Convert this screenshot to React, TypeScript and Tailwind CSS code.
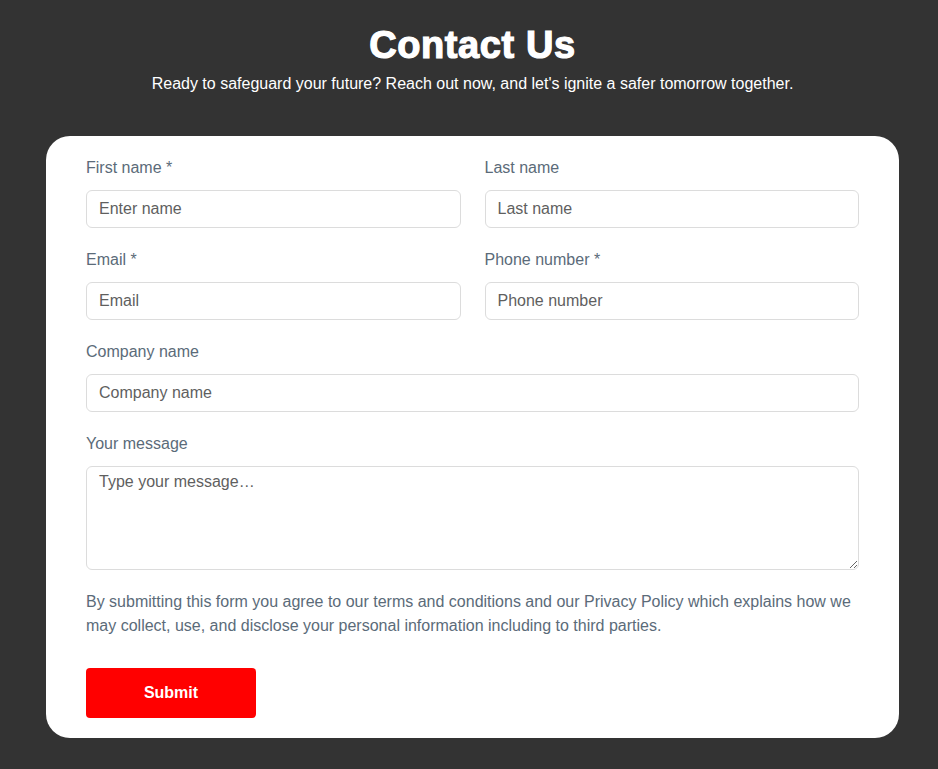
export default function App() {
  const label = 'block text-base leading-6 text-[#5b6b79] mb-[10px]'
  const input =
    'w-full h-[38px] px-3 rounded-md border border-[#dcdcdc] bg-white text-base text-[#444] placeholder:text-[#5f5f5f] outline-none'
  return (
    <div className="min-h-[769px] bg-[#333333] pt-[23px] pb-[31px] font-['Liberation_Sans',Arial,sans-serif]">
      <div className="ml-[46px] w-[853px]">
        <h1 className="text-center text-[38px] leading-[44px] font-bold text-white [-webkit-text-stroke:1.2px_white] tracking-[0.6px]">
          Contact Us
        </h1>
        <p className="mt-[5px] text-center text-base leading-6 text-white">
          Ready to safeguard your future? Reach out now, and let's ignite a safer tomorrow together.
        </p>
      </div>
      <form
        className="mt-[40px] ml-[46px] w-[853px] bg-white rounded-3xl px-10 pt-5 pb-5"
        onSubmit={(e) => e.preventDefault()}
      >
        <div className="grid grid-cols-2 gap-x-6">
          <div className="mb-5">
            <label className={label}>First name *</label>
            <input className={input} placeholder="Enter name" />
          </div>
          <div className="mb-5">
            <label className={label}>Last name</label>
            <input className={input} placeholder="Last name" />
          </div>
          <div className="mb-5">
            <label className={label}>Email *</label>
            <input className={input} placeholder="Email" />
          </div>
          <div className="mb-5">
            <label className={label}>Phone number *</label>
            <input className={input} placeholder="Phone number" />
          </div>
        </div>
        <div className="mb-5">
          <label className={label}>Company name</label>
          <input className={input} placeholder="Company name" />
        </div>
        <div className="mb-5">
          <label className={label}>Your message</label>
          <textarea
            className="block w-full h-[104px] px-3 py-[3px] rounded-md border border-[#dcdcdc] text-base leading-6 text-[#444] placeholder:text-[#5f5f5f] outline-none"
            placeholder="Type your message…"
          />
        </div>
        <p className="text-base leading-6 text-[#5b6b79]">
          By submitting this form you agree to our terms and conditions and our Privacy Policy which explains how we may
          collect, use, and disclose your personal information including to third parties.
        </p>
        <button
          type="submit"
          className="mt-[30px] w-[170px] h-[50px] rounded bg-[#ff0000] text-white text-base font-bold"
        >
          Submit
        </button>
      </form>
    </div>
  )
}
